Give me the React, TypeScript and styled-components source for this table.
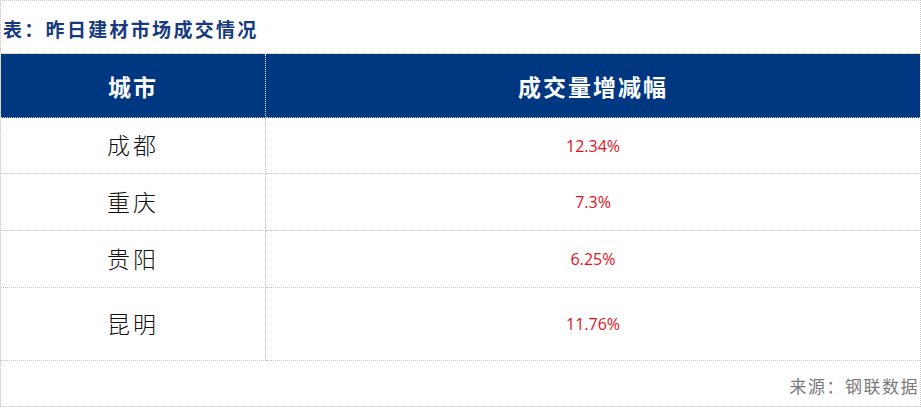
import React from "react";
import styled, { createGlobalStyle } from "styled-components";

const Global = createGlobalStyle`
  html, body { margin: 0; padding: 0; background: #ffffff; }
  * { box-sizing: border-box; }
`;

const DOT = "1px dotted #c4c4c4";

const Frame = styled.div`
  width: 921px;
  height: 407px;
  border: ${DOT};
  display: flex;
  flex-direction: column;
  background: #fff;
  font-family: "Noto Sans CJK SC", "Noto Sans", sans-serif;
`;

const Title = styled.div`
  height: 53px;
  border-bottom: ${DOT};
  display: flex;
  align-items: center;
  padding-left: 2px;
  padding-top: 3px;
  color: #163a7d;
  font-size: 19px;
  font-weight: 700;
  letter-spacing: 2.3px;
  font-family: "Noto Sans CJK SC", serif;
`;

const Grid = styled.div`
  display: grid;
  grid-template-columns: 265px 654px;
`;

const HeadCell = styled.div<{ $last?: boolean }>`
  height: 64px;
  background: #003781;
  color: #ffffff;
  display: flex;
  align-items: center;
  justify-content: center;
  font-size: 23px;
  font-weight: 700;
  letter-spacing: 2px;
  border-bottom: ${DOT};
  border-right: ${(p) => (p.$last ? "none" : "1px dotted #ffffff")};
`;

const Cell = styled.div<{ $h: number; $last?: boolean }>`
  height: ${(p) => p.$h}px;
  display: flex;
  align-items: center;
  justify-content: center;
  border-bottom: ${DOT};
  border-right: ${(p) => (p.$last ? "none" : DOT)};
`;

const City = styled.span`
  font-size: 23px;
  font-weight: 300;
  color: #111;
  letter-spacing: 3px;
  margin-top: -3px;
`;

const Pct = styled.span`
  font-size: 16px;
  color: #e3101c;
  font-family: "Open Sans", "Noto Sans", sans-serif;
`;

const Source = styled.div`
  flex: 1;
  display: flex;
  align-items: center;
  justify-content: flex-end;
  padding-right: 1px;
  padding-top: 3px;
  color: #7a7a7a;
  font-size: 17px;
  letter-spacing: 1.5px;
`;

const rows = [
  { city: "成都", pct: "12.34%", h: 56 },
  { city: "重庆", pct: "7.3%", h: 57 },
  { city: "贵阳", pct: "6.25%", h: 57 },
  { city: "昆明", pct: "11.76%", h: 73 },
];

export default function App() {
  return (
    <>
      <Global />
      <Frame>
        <Title>表：昨日建材市场成交情况</Title>
        <Grid>
          <HeadCell>城市</HeadCell>
          <HeadCell $last>成交量增减幅</HeadCell>
          {rows.map((r) => (
            <React.Fragment key={r.city}>
              <Cell $h={r.h}>
                <City>{r.city}</City>
              </Cell>
              <Cell $h={r.h} $last>
                <Pct>{r.pct}</Pct>
              </Cell>
            </React.Fragment>
          ))}
        </Grid>
        <Source>来源：钢联数据</Source>
      </Frame>
    </>
  );
}
